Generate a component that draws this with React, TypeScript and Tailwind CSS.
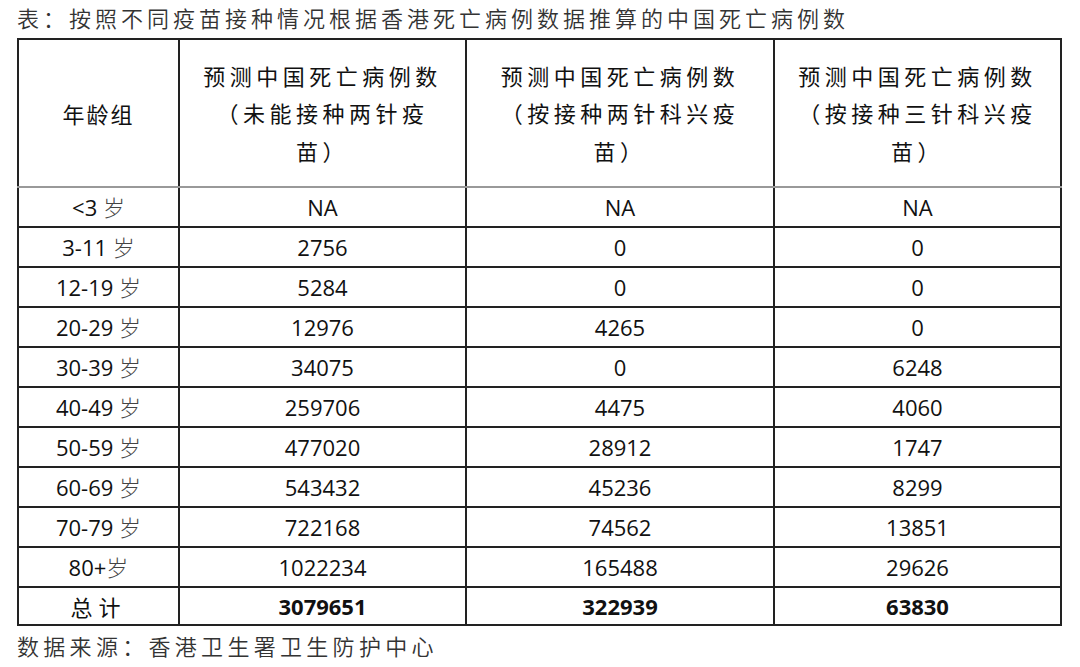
const rows: [string, string, string, string][] = [
  ["<3 岁", "NA", "NA", "NA"],
  ["3-11 岁", "2756", "0", "0"],
  ["12-19 岁", "5284", "0", "0"],
  ["20-29 岁", "12976", "4265", "0"],
  ["30-39 岁", "34075", "0", "6248"],
  ["40-49 岁", "259706", "4475", "4060"],
  ["50-59 岁", "477020", "28912", "1747"],
  ["60-69 岁", "543432", "45236", "8299"],
  ["70-79 岁", "722168", "74562", "13851"],
  ["80+岁", "1022234", "165488", "29626"],
];

const heads = [
  ["预测中国死亡病例数", "（未能接种两针疫", "苗）"],
  ["预测中国死亡病例数", "（按接种两针科兴疫", "苗）"],
  ["预测中国死亡病例数", "（按接种三针科兴疫", "苗）"],
];

function AgeLabel({ text }: { text: string }) {
  // the 岁 glyph is lighter than the digits in the original
  const i = text.indexOf("岁");
  return (
    <>
      {text.slice(0, i)}
      <span className="font-light text-[#444]">岁</span>
    </>
  );
}

export default function App() {
  return (
    <div className="w-[1080px] h-[667px] bg-white pl-[17px] font-['Open_Sans','Noto_Sans_CJK_SC',sans-serif]">
      {/* Title */}
      <div className="h-[38px] pb-[3px] flex items-center text-[22px] tracking-[4px] text-[#333] font-['Noto_Sans_CJK_SC',sans-serif] font-[350]">
        表：按照不同疫苗接种情况根据香港死亡病例数据推算的中国死亡病例数
      </div>

      <table className="table-fixed border-collapse w-[1043px] text-[#111]">
        <colgroup>
          <col className="w-[161px]" />
          <col className="w-[287px]" />
          <col className="w-[308px]" />
          <col className="w-[287px]" />
        </colgroup>
        <thead>
          <tr className="h-[148px]">
            <th className="border-2 border-[#222] border-b-[#999] font-normal text-[22px] tracking-[2px] font-['Noto_Sans_CJK_SC',sans-serif]">
              年龄组
            </th>
            {heads.map((h, i) => (
              <th
                key={i}
                className="border-2 border-[#222] border-b-[#999] font-normal text-[22px] leading-[37.5px] tracking-[4.5px] font-['Noto_Sans_CJK_SC',sans-serif]"
              >
                {h[0]}
                <br />
                {h[1]}
                <br />
                {h[2]}
              </th>
            ))}
          </tr>
        </thead>
        <tbody className="text-[22px] text-center">
          {rows.map((r) => (
            <tr key={r[0]} className="h-[40px]">
              <td className="border-2 border-[#222] p-0">
                <AgeLabel text={r[0]} />
              </td>
              <td className="border-2 border-[#222] p-0">{r[1]}</td>
              <td className="border-2 border-[#222] p-0">{r[2]}</td>
              <td className="border-2 border-[#222] p-0">{r[3]}</td>
            </tr>
          ))}
          <tr className="h-[38px]">
            <td className="border-2 border-[#222] p-0 tracking-[6px] font-['Noto_Sans_CJK_SC',sans-serif]">总计</td>
            <td className="border-2 border-[#222] p-0 font-bold">3079651</td>
            <td className="border-2 border-[#222] p-0 font-bold">322939</td>
            <td className="border-2 border-[#222] p-0 font-bold">63830</td>
          </tr>
        </tbody>
      </table>

      {/* Source */}
      <div className="h-[38px] flex items-center text-[22px] tracking-[4.3px] text-[#333] font-['Noto_Sans_CJK_SC',sans-serif] font-[350]">
        数据来源：香港卫生署卫生防护中心
      </div>
    </div>
  );
}
